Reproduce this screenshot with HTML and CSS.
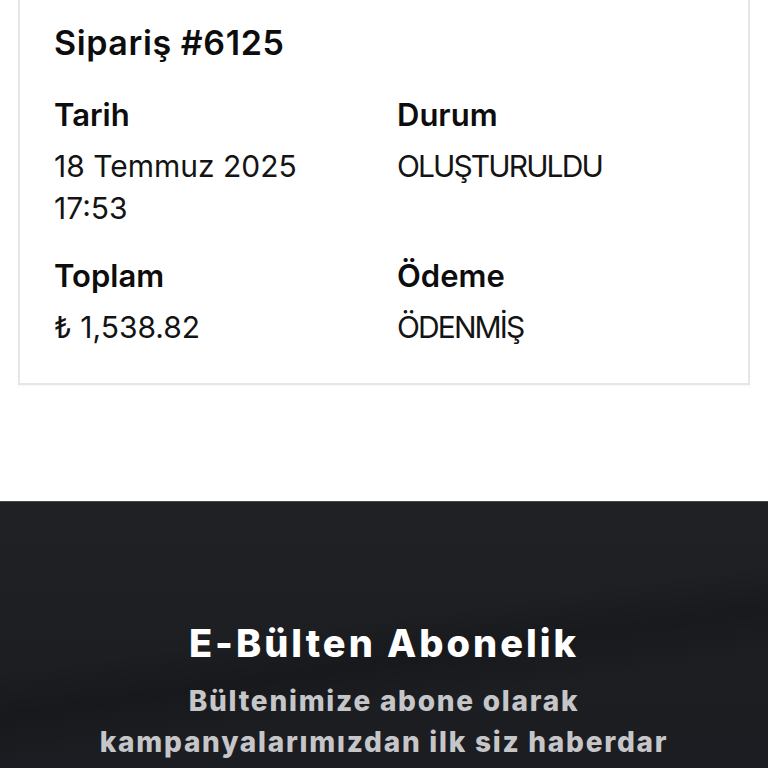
FILE: index.html
```html
<!DOCTYPE html>
<html lang="tr">
<head>
<meta charset="utf-8">
<title>Sipariş #6125</title>
<link rel="stylesheet" href="styles.css">
</head>
<body>
<main class="page">
  <section class="order-card">
    <h1 class="order-title">Sipariş #6125</h1>
    <div class="order-grid">
      <div class="field">
        <div class="field-label">Tarih</div>
        <div class="field-value">18 Temmuz 2025<br>17:53</div>
      </div>
      <div class="field">
        <div class="field-label">Durum</div>
        <div class="field-value caps">OLUŞTURULDU</div>
      </div>
      <div class="field">
        <div class="field-label">Toplam</div>
        <div class="field-value">₺ 1,538.82</div>
      </div>
      <div class="field">
        <div class="field-label">Ödeme</div>
        <div class="field-value caps">ÖDENMİŞ</div>
      </div>
    </div>
  </section>
</main>
<footer class="newsletter">
  <h2 class="newsletter-title">E-Bülten Abonelik</h2>
  <p class="newsletter-text">Bültenimize abone olarak kampanyalarımızdan ilk siz haberdar olun.</p>
</footer>
</body>
</html>
```
FILE: styles.css
```css
html, body {
  margin: 0;
  padding: 0;
  background: #ffffff;
}
body {
  font-family: "Inter", "Noto Sans", sans-serif;
  color: #111111;
  overflow: hidden;
}
.page {
  padding: 0 18px 116px 18px;
}
.order-card {
  border: 2px solid #e6e6e6;
  border-top: 0;
  padding: 23px 34px 35px 34px;
  background: #ffffff;
  box-shadow: 0 1px 2px rgba(0,0,0,0.04);
}
.order-title {
  margin: 0 0 32px 0;
  font-size: 34px;
  line-height: 40px;
  font-weight: 600;
  letter-spacing: 0.6px;
  color: #0d0d0d;
}
.order-grid {
  display: grid;
  grid-template-columns: 343px 1fr;
  row-gap: 27px;
}
.field-label {
  font-size: 31px;
  line-height: 40px;
  font-weight: 600;
  color: #0d0d0d;
  margin-bottom: 10px;
}
.field-value {
  font-size: 30px;
  line-height: 42px;
  font-weight: 400;
  color: #141414;
}
.field-value.caps {
  letter-spacing: -1.9px;
}
.newsletter {
  border-top: 1px solid #4a4a4c;
  background:
    linear-gradient(172deg, rgba(255,255,255,0) 30%, rgba(0,0,0,0.18) 38%, rgba(255,255,255,0) 46%),
    linear-gradient(180deg, #202124 0%, #1c1e22 35%, #181b20 100%);
  padding: 117px 40px 40px 40px;
  min-height: 300px;
  text-align: center;
}
.newsletter-title {
  margin: 0 0 14px 0;
  font-size: 38px;
  line-height: 48px;
  font-weight: 800;
  letter-spacing: 3px;
  color: #ffffff;
}
.newsletter-text {
  margin: 0 auto;
  max-width: 620px;
  font-size: 28px;
  line-height: 41px;
  font-weight: 800;
  letter-spacing: 1.75px;
  color: #c6c6c9;
}
```
